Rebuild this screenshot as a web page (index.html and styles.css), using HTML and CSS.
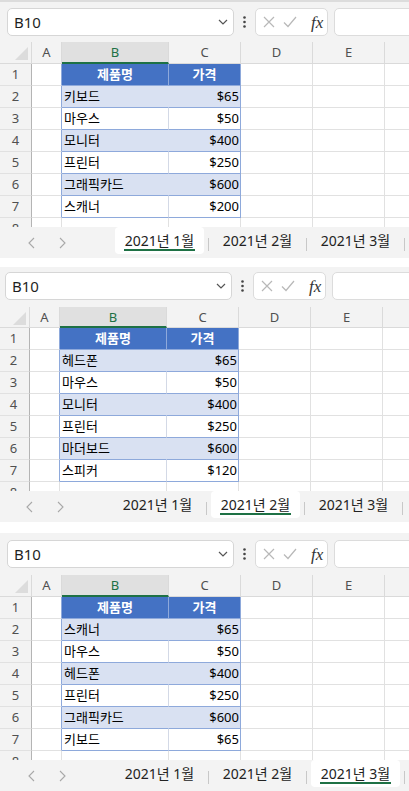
FILE: index.html
```html
<!DOCTYPE html>
<html lang="ko">
  <head>
    <meta charset="UTF-8" />
    <meta name="viewport" content="width=device-width, initial-scale=1.0" />
    <title>2021 제품 가격</title>
    <link rel="stylesheet" href="styles.css">
  </head>
  <body>
    <div class="panel first">
      <div class="formula-bar">
        <div class="name-box">
          <span>B10</span>
          <svg class="chevron" width="10" height="6" viewBox="0 0 10 6"><polyline points="1,1 5,5 9,1" /></svg>
        </div>
        <div class="more"><svg width="3" height="12" viewBox="0 0 3 12"><circle cx="1.5" cy="1.5" r="1.3" /><circle cx="1.5" cy="6" r="1.3" /><circle cx="1.5" cy="10.5" r="1.3" /></svg></div>
        <div class="fx-box">
          <svg class="cancel" width="12" height="12" viewBox="0 0 12 12"><path d="M1 1 L11 11 M11 1 L1 11" /></svg>
          <svg class="enter" width="14" height="12" viewBox="0 0 14 12"><polyline points="1,6.5 5,10.5 13,1" /></svg>
          <span class="fx">fx</span>
        </div>
        <div class="input-box"></div>
      </div>
      <div class="sheet" data-month="jan"></div>
      <div class="tabs">
        <div class="nav">
          <svg width="8" height="12" viewBox="0 0 8 12"><polyline points="7,1 2,6 7,11" /></svg>
          <svg width="8" height="12" viewBox="0 0 8 12"><polyline points="1,1 6,6 1,11" /></svg>
        </div>
        <div class="tab active"><div class="tab-inner"><span class="label">2021년 1월</span></div></div>
        <span class="sep"></span>
        <div class="tab"><div class="tab-inner"><span class="label">2021년 2월</span></div></div>
        <span class="sep"></span>
        <div class="tab"><div class="tab-inner"><span class="label">2021년 3월</span></div></div>
        <span class="sep"></span>
      </div>
    </div>

    <div class="panel second">
      <div class="formula-bar">
        <div class="name-box">
          <span>B10</span>
          <svg class="chevron" width="10" height="6" viewBox="0 0 10 6"><polyline points="1,1 5,5 9,1" /></svg>
        </div>
        <div class="more"><svg width="3" height="12" viewBox="0 0 3 12"><circle cx="1.5" cy="1.5" r="1.3" /><circle cx="1.5" cy="6" r="1.3" /><circle cx="1.5" cy="10.5" r="1.3" /></svg></div>
        <div class="fx-box">
          <svg class="cancel" width="12" height="12" viewBox="0 0 12 12"><path d="M1 1 L11 11 M11 1 L1 11" /></svg>
          <svg class="enter" width="14" height="12" viewBox="0 0 14 12"><polyline points="1,6.5 5,10.5 13,1" /></svg>
          <span class="fx">fx</span>
        </div>
        <div class="input-box"></div>
      </div>
      <div class="sheet" data-month="feb"></div>
      <div class="tabs">
        <div class="nav">
          <svg width="8" height="12" viewBox="0 0 8 12"><polyline points="7,1 2,6 7,11" /></svg>
          <svg width="8" height="12" viewBox="0 0 8 12"><polyline points="1,1 6,6 1,11" /></svg>
        </div>
        <div class="tab"><div class="tab-inner"><span class="label">2021년 1월</span></div></div>
        <span class="sep"></span>
        <div class="tab active"><div class="tab-inner"><span class="label">2021년 2월</span></div></div>
        <span class="sep"></span>
        <div class="tab"><div class="tab-inner"><span class="label">2021년 3월</span></div></div>
        <span class="sep"></span>
      </div>
    </div>

    <div class="panel third">
      <div class="formula-bar">
        <div class="name-box">
          <span>B10</span>
          <svg class="chevron" width="10" height="6" viewBox="0 0 10 6"><polyline points="1,1 5,5 9,1" /></svg>
        </div>
        <div class="more"><svg width="3" height="12" viewBox="0 0 3 12"><circle cx="1.5" cy="1.5" r="1.3" /><circle cx="1.5" cy="6" r="1.3" /><circle cx="1.5" cy="10.5" r="1.3" /></svg></div>
        <div class="fx-box">
          <svg class="cancel" width="12" height="12" viewBox="0 0 12 12"><path d="M1 1 L11 11 M11 1 L1 11" /></svg>
          <svg class="enter" width="14" height="12" viewBox="0 0 14 12"><polyline points="1,6.5 5,10.5 13,1" /></svg>
          <span class="fx">fx</span>
        </div>
        <div class="input-box"></div>
      </div>
      <div class="sheet" data-month="mar"></div>
      <div class="tabs">
        <div class="nav">
          <svg width="8" height="12" viewBox="0 0 8 12"><polyline points="7,1 2,6 7,11" /></svg>
          <svg width="8" height="12" viewBox="0 0 8 12"><polyline points="1,1 6,6 1,11" /></svg>
        </div>
        <div class="tab"><div class="tab-inner"><span class="label">2021년 1월</span></div></div>
        <span class="sep"></span>
        <div class="tab"><div class="tab-inner"><span class="label">2021년 2월</span></div></div>
        <span class="sep"></span>
        <div class="tab active"><div class="tab-inner"><span class="label">2021년 3월</span></div></div>
        <span class="sep"></span>
      </div>
    </div>

    <script>
      const PRODUCTS = {
        jan: [
          ["키보드", "$65"],
          ["마우스", "$50"],
          ["모니터", "$400"],
          ["프린터", "$250"],
          ["그래픽카드", "$600"],
          ["스캐너", "$200"],
        ],
        feb: [
          ["헤드폰", "$65"],
          ["마우스", "$50"],
          ["모니터", "$400"],
          ["프린터", "$250"],
          ["마더보드", "$600"],
          ["스피커", "$120"],
        ],
        mar: [
          ["스캐너", "$65"],
          ["마우스", "$50"],
          ["헤드폰", "$400"],
          ["프린터", "$250"],
          ["그래픽카드", "$600"],
          ["키보드", "$65"],
        ],
      };

      const CORNER =
        '<svg width="32" height="22" viewBox="0 0 32 22"><polygon points="15,18 28,18 28,5" /></svg>';

      function buildSheet(items) {
        let html = '<div class="row head">';
        html += '<div class="cell corner">' + CORNER + "</div>";
        html += '<div class="cell ch">A</div>';
        html += '<div class="cell ch sel">B</div>';
        html += '<div class="cell ch">C</div>';
        html += '<div class="cell ch">D</div>';
        html += '<div class="cell ch">E</div>';
        html += '<div class="cell ch last"></div>';
        html += "</div>";

        html += '<div class="row">';
        html += '<div class="cell rh">1</div>';
        html += '<div class="cell edge"></div>';
        html += '<div class="cell tb t-head">제품명</div>';
        html += '<div class="cell tc t-head">가격</div>';
        html += '<div class="cell"></div><div class="cell"></div><div class="cell last"></div>';
        html += "</div>";

        items.forEach(([name, price], i) => {
          const stripe = i % 2 === 0 ? " stripe" : "";
          html += '<div class="row">';
          html += '<div class="cell rh">' + (i + 2) + "</div>";
          html += '<div class="cell edge"></div>';
          html += '<div class="cell tb' + stripe + '">' + name + "</div>";
          html += '<div class="cell tc num' + stripe + '">' + price + "</div>";
          html += '<div class="cell"></div><div class="cell"></div><div class="cell last"></div>';
          html += "</div>";
        });

        // row 8 is cut off by the sheet tabs
        html += '<div class="row partial">';
        html += '<div class="cell rh">8</div>';
        html += '<div class="cell"></div><div class="cell"></div><div class="cell"></div>';
        html += '<div class="cell"></div><div class="cell"></div><div class="cell last"></div>';
        html += "</div>";
        return html;
      }

      document.querySelectorAll(".sheet").forEach((sheet) => {
        sheet.innerHTML = buildSheet(PRODUCTS[sheet.dataset.month]);
      });
    </script>
  </body>
</html>
```

FILE: styles.css
```css
body {
  margin: 0;
  width: 409px;
  overflow: hidden;
  background: #fff;
  font-family: "Noto Sans", "Noto Sans CJK KR", sans-serif;
  color: #222;
}

.panel {
  background: #f3f3f3;
  padding-top: 5px;
  overflow: hidden;
}

.panel.first {
  border-top: 2px solid #dcdcdc;
  padding-top: 6px;
}

.panel.first .formula-bar {
  margin-bottom: 6px;
}

.panel.second {
  margin-top: 9px;
  margin-left: -2px;
}

.panel.second .row.head {
  height: 21px;
}

.panel.third {
  margin-top: 11px;
  padding-top: 7px;
}

/* formula bar */

.formula-bar {
  display: flex;
  height: 28px;
  margin-bottom: 7px;
  padding-left: 7px;
}

.name-box {
  width: 227px;
  flex-shrink: 0;
  box-sizing: border-box;
  display: flex;
  align-items: center;
  justify-content: space-between;
  padding: 0 5px 0 6px;
  background: #fff;
  border: 1px solid #d6d6d6;
  border-radius: 5px;
  font-size: 15px;
  color: #1f1f1f;
}

.chevron polyline {
  fill: none;
  stroke: #555;
  stroke-width: 1.2;
}

.more {
  width: 21px;
  flex-shrink: 0;
  display: flex;
  justify-content: center;
  align-items: center;
}

.more circle {
  fill: #444;
}

.fx-box {
  width: 73px;
  flex-shrink: 0;
  box-sizing: border-box;
  display: flex;
  align-items: center;
  padding-left: 7px;
  background: #fff;
  border: 1px solid #dcdcdc;
  border-radius: 5px;
}

.cancel path,
.enter polyline {
  fill: none;
  stroke: #b8b8b8;
  stroke-width: 1.2;
}

.enter {
  margin-left: 8px;
}

.fx {
  margin-left: 14px;
  font-family: "Liberation Serif", serif;
  font-style: italic;
  font-size: 17px;
  line-height: 1;
  color: #333;
}

.input-box {
  width: 100px;
  flex-shrink: 0;
  margin-left: 6px;
  background: #fff;
  border: 1px solid #dcdcdc;
  border-radius: 5px;
}

/* grid */

.row {
  display: grid;
  grid-template-columns: 32px 30px 107px 72px 72px 72px 1fr;
  height: 22px;
  background: #fff;
}

.cell {
  box-sizing: border-box;
  border-right: 1px solid #e1e1e1;
  border-bottom: 1px solid #e1e1e1;
  padding: 0 2px;
  font-size: 13px;
  line-height: 21px;
  white-space: nowrap;
  overflow: hidden;
}

.cell.last {
  border-right: none;
}

.row.head .cell {
  background: #f3f3f3;
  border-right-color: #dadada;
  border-bottom-color: #dadada;
  color: #505050;
  text-align: center;
}

.row.head .last {
  border-right: none;
}

.corner {
  padding: 0;
}

.corner svg {
  display: block;
}

.corner polygon {
  fill: #dcdcdc;
}

.row.head .ch.sel {
  background: #e0e0e0;
  color: #1e7145;
  border-bottom: 2px solid #1e7145;
}

.rh {
  background: #f3f3f3;
  color: #505050;
  text-align: center;
  border-right-color: #b4b4b4;
  border-bottom-color: #e1e1e1;
}

.row.partial {
  height: 9px;
  overflow: hidden;
}

.row.partial .cell {
  border-bottom: none;
}

/* table */

.edge {
  border-right-color: #8ea9db;
}

.tb,
.tc {
  color: #000;
  border-bottom-color: #8ea9db;
}

.tb {
  border-right-color: #d3d9e6;
}

.tc {
  border-right-color: #8ea9db;
}

.num {
  text-align: right;
  padding-right: 1px;
}

.stripe {
  background: #d9e1f2;
}

.tb.stripe {
  border-right-color: #d9e1f2;
}

.t-head {
  background: #4472c4;
  color: #fff;
  font-weight: bold;
  text-align: center;
}

.tb.t-head {
  border-right-color: #8ea9db;
}

/* sheet tabs */

.tabs {
  display: flex;
  height: 31px;
}

.nav {
  width: 111px;
  flex-shrink: 0;
  display: flex;
  align-items: center;
  gap: 24px;
  padding-left: 27px;
  box-sizing: border-box;
}

.nav polyline {
  fill: none;
  stroke: #a8a8a8;
  stroke-width: 1.1;
}

.tab {
  width: 97px;
  flex-shrink: 0;
  box-sizing: border-box;
  padding: 0 4px;
  display: flex;
}

.tab-inner {
  flex: 1;
  height: 27px;
  display: flex;
  justify-content: center;
  align-items: flex-end;
  padding-bottom: 3px;
  box-sizing: border-box;
  border-radius: 4px;
}

.tab.active .tab-inner {
  background: #fff;
}

.label {
  font-size: 14px;
  line-height: 16px;
  padding: 0 1px;
  border-bottom: 2px solid transparent;
  color: #222;
}

.tab.active .label {
  border-bottom-color: #1e7145;
}

.sep {
  width: 1px;
  height: 13px;
  flex-shrink: 0;
  align-self: center;
  margin-top: 4px;
  background: #c8c8c8;
}
```
